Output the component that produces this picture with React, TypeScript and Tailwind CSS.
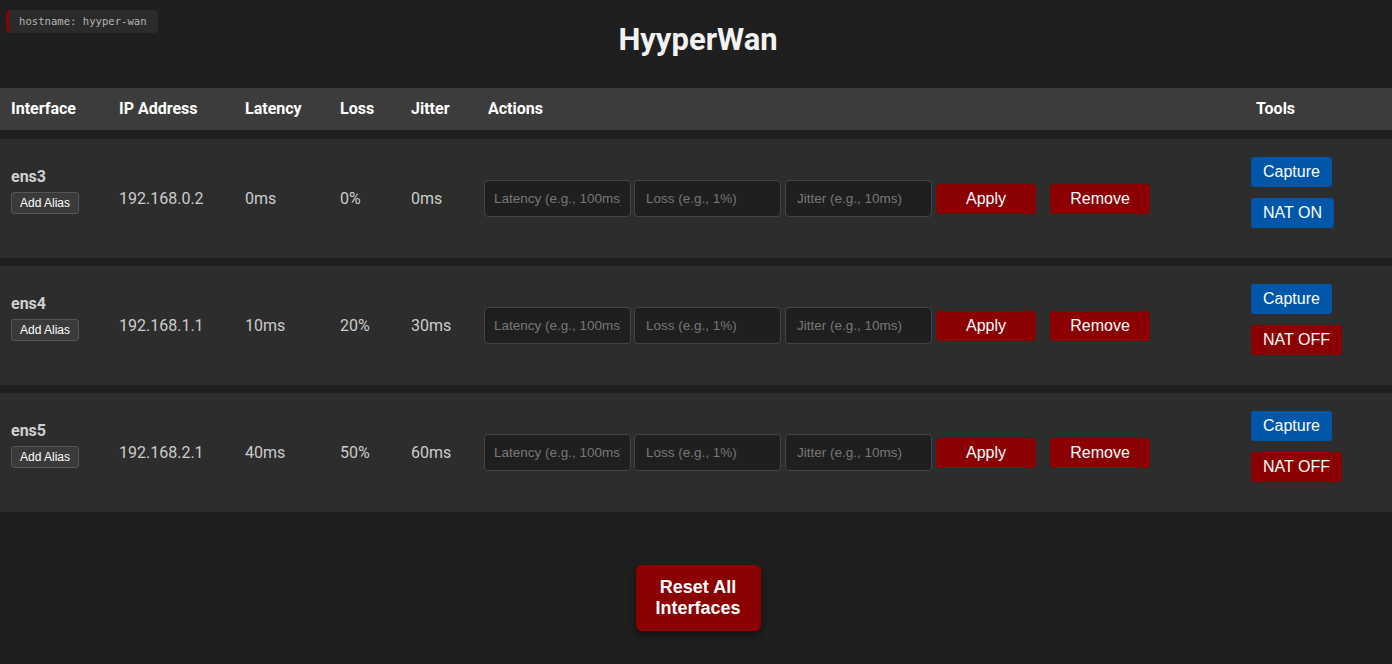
import React from 'react';

type Iface = {
  name: string;
  ip: string;
  latency: string;
  loss: string;
  jitter: string;
  nat: boolean;
};

const interfaces: Iface[] = [
  { name: 'ens3', ip: '192.168.0.2', latency: '0ms', loss: '0%', jitter: '0ms', nat: true },
  { name: 'ens4', ip: '192.168.1.1', latency: '10ms', loss: '20%', jitter: '30ms', nat: false },
  { name: 'ens5', ip: '192.168.2.1', latency: '40ms', loss: '50%', jitter: '60ms', nat: false },
];

const cols = 'grid grid-cols-[108px_126px_95px_71px_77px_1fr_147px]';
const arial = "font-['Liberation_Sans',Arial,sans-serif]";

function Row({ iface }: { iface: Iface }) {
  return (
    <div className={`${cols} h-[119px] bg-[#2d2d2d] text-[16px] text-[#cccccc]`}>
      <div className="flex flex-col justify-start pt-[28px] pl-[11px]">
        <span className="font-bold leading-[20px] text-[#d0d0d0]">{iface.name}</span>
        <button className={`${arial} mt-[5px] w-fit h-[22px] px-[8px] text-[12px] text-white bg-[#3a3a3a] border border-[#555] rounded-[3px]`}>
          Add Alias
        </button>
      </div>
      <div className="flex items-center pl-[11px]">{iface.ip}</div>
      <div className="flex items-center pl-[11px]">{iface.latency}</div>
      <div className="flex items-center pl-[11px]">{iface.loss}</div>
      <div className="flex items-center pl-[11px]">{iface.jitter}</div>
      <div className={`${arial} flex items-center pl-[7px]`}>
        <input
          placeholder="Latency (e.g., 100ms)"
          className="w-[147px] h-[37px] px-[9px] text-[13.5px] bg-[#1f1f1f] border border-[#444] rounded-[4px] placeholder:text-[#777] outline-none"
        />
        <input
          placeholder="Loss (e.g., 1%)"
          className="ml-[3px] w-[147px] h-[37px] px-[11px] text-[13.5px] bg-[#1f1f1f] border border-[#444] rounded-[4px] placeholder:text-[#777] outline-none"
        />
        <input
          placeholder="Jitter (e.g., 10ms)"
          className="ml-[4px] w-[147px] h-[37px] px-[11px] text-[13.5px] bg-[#1f1f1f] border border-[#444] rounded-[4px] placeholder:text-[#777] outline-none"
        />
        <button className="ml-[4px] w-[100px] h-[30px] text-[16px] text-white bg-[#8b0000] rounded-[4px]">Apply</button>
        <button className="ml-[14px] w-[100px] h-[30px] text-[16px] text-white bg-[#8b0000] rounded-[4px]">Remove</button>
      </div>
      <div className={`${arial} flex flex-col items-start pl-[6px] pt-[18px] gap-[11px]`}>
        <button className="h-[30px] px-[12px] text-[16px] text-white bg-[#0056a8] rounded-[3px]">Capture</button>
        {iface.nat ? (
          <button className="h-[30px] px-[12px] text-[16px] text-white bg-[#0056a8] rounded-[3px]">NAT ON</button>
        ) : (
          <button className="h-[30px] px-[12px] text-[16px] text-white bg-[#8b0000] rounded-[3px]">NAT OFF</button>
        )}
      </div>
    </div>
  );
}

export default function App() {
  return (
    <div className="min-h-[664px] w-full bg-[#1f1f1f] font-['Roboto',sans-serif] text-white">
      <div className="pt-[10px] pl-[6px]">
        <div className="flex items-center h-[23px] w-fit pl-[10px] pr-[11px] bg-[#2b2b2b] border-l-[3px] border-[#8b0000] rounded-[4px] font-['DejaVu_Sans_Mono',monospace] text-[10.6px] text-[#b5b5b5]">
          hostname: hyyper-wan
        </div>
      </div>
      <h1 className="-mt-[12px] text-center text-[31px] font-bold leading-[38px] text-[#f2f2f2] pl-[4px]">HyyperWan</h1>

      <div className="mt-[29px] flex flex-col gap-[8px]">
        <div className={`${cols} h-[42px] bg-[#3c3c3c] text-[16px] font-bold text-white mb-[1px]`}>
          <div className="flex items-center pl-[11px]">Interface</div>
          <div className="flex items-center pl-[11px]">IP Address</div>
          <div className="flex items-center pl-[11px]">Latency</div>
          <div className="flex items-center pl-[11px]">Loss</div>
          <div className="flex items-center pl-[11px]">Jitter</div>
          <div className="flex items-center pl-[11px]">Actions</div>
          <div className="flex items-center pl-[11px]">Tools</div>
        </div>
        {interfaces.map((i) => (
          <Row key={i.name} iface={i} />
        ))}
      </div>

      <div className="flex justify-center mt-[53px] pb-[33px] pl-[4px]">
        <button className={`${arial} w-[125px] h-[66px] text-[18px] font-bold leading-[21px] text-white bg-[#8b0000] rounded-[6px] shadow-[0_4px_10px_rgba(0,0,0,0.5)]`}>
          Reset All
          <br />
          Interfaces
        </button>
      </div>
    </div>
  );
}
